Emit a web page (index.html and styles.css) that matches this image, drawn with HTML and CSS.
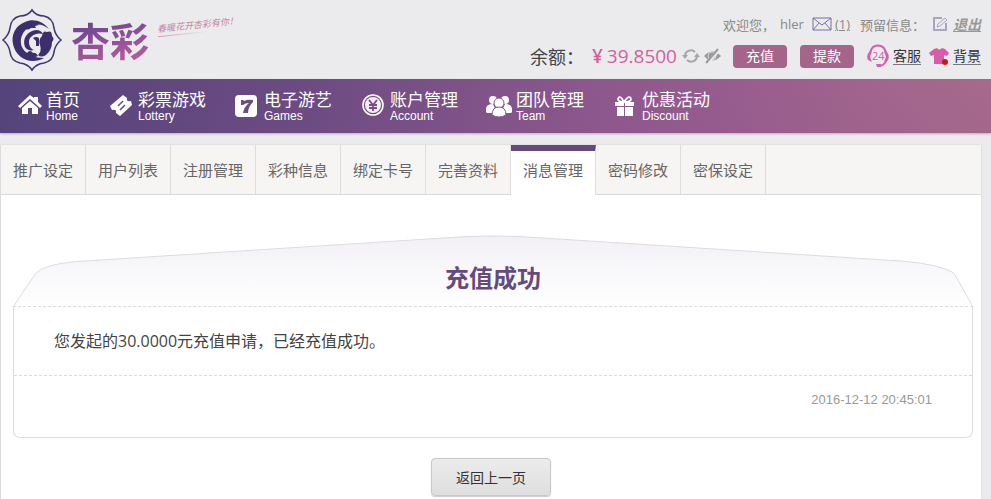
FILE: index.html
```html
<!DOCTYPE html>
<html lang="zh-CN">
<head>
<meta charset="utf-8">
<meta name="viewport" content="width=device-width, initial-scale=1">
<title>杏彩 - 消息管理</title>
<link rel="stylesheet" href="styles.css">
</head>
<body>
<header class="header">
  <a class="logo" href="#">
    <svg class="logo-mark" viewBox="0 0 62 64" aria-hidden="true">
      <path fill="none" stroke="#43346f" stroke-width="1.6" d="M31 2Q35 8 43 8Q52 10 53 20Q54 27 60 32Q54 37 53 44Q52 53 43 55Q35 56 31 62Q27 56 19 55Q10 53 9 44Q8 37 2 32Q8 27 9 20Q10 10 19 8Q27 8 31 2Z"/>
      <g fill="#3d2f6c">
        <path d="M48 21C42 13 32 10 24 14C14 18 10 27 12 36C14 46 22 53 32 53C36 53 40 52 43 50C34 50 26 47 22 41C17 33 21 22 30 18C37 15 43 17 48 21Z"/>
        <path d="M23 20C27 15 33 14 38 17L34 18L35 20L30 20Q26 23 23 20Z"/>
        <path d="M24 39C21 31 26 23 35 22C39 22 41 24 42 26C35 24 28 28 28 34C28 38 30 41 33 42C29 43 26 42 24 39Z"/>
        <path d="M32 30Q35 28 38 30L38 38L35 38L35 33Z"/>
        <path d="M41 28Q42 22 46 24Q51 22 51 28Q54 31 51 34Q51 42 45 47Q40 50 37 47Q41 43 39 37Q37 32 41 28Z"/>
        <path d="M20 45Q24 43 26 45Q29 41 32 45Q35 44 37 48Q32 51 26 49Z"/>
      </g>
    </svg>
    <span class="logo-name">杏彩</span>
    <span class="slogan">春暖花开杏彩有你！</span>
  </a>
  <div class="account">
    <div class="greeting">
      <span>欢迎您，</span>
      <span class="user">hler</span>
      <a class="mail" href="#">
        <svg width="20" height="14" viewBox="0 0 20 14" fill="none" stroke="#77709c" aria-hidden="true"><path d="M1 1H19V13H1ZM1 1L10 8L19 1M1 13L7 6M19 13L13 6"/></svg>
        <u>(1)</u>
      </a>
      <span>预留信息：</span>
      <a class="edit" href="#" aria-label="编辑预留信息">
        <svg width="15" height="14" viewBox="0 0 15 14" fill="none" stroke="#aaa6c0" aria-hidden="true"><path stroke-width="2" d="M9 1H1V13H13V6"/><path d="M4 10L5 7L12 1L14 3L7 9Z"/></svg>
      </a>
      <a class="logout" href="#">退出</a>
    </div>
    <div class="wallet">
      <span class="balance-label">余额：</span>
      <span class="yen">¥</span>
      <span class="balance">39.8500</span>
      <button class="icon-button" type="button" aria-label="刷新余额">
        <svg width="18" height="16" viewBox="0 0 18 16" aria-hidden="true"><g fill="none" stroke="#a6a6a8" stroke-width="2"><path d="M3 7A6 6 0 0 1 13 4M15 9A6 6 0 0 1 5 12"/></g><g fill="#a6a6a8"><path d="M0 7H6L3 11ZM12 9H18L15 5Z"/></g></svg>
      </button>
      <button class="icon-button eye" type="button" aria-label="隐藏余额">
        <svg width="17" height="14" viewBox="0 0 17 14" aria-hidden="true"><path fill="#9b9b9d" d="M0 7Q8-2 17 7Q8 16 0 7Z"/><circle cx="8" cy="7" r="4" fill="none" stroke="#d4d4d6"/><path stroke="#ebebed" stroke-width="3" d="M4 14L15 1"/><path stroke="#9b9b9d" stroke-width="2" d="M2 14L14 0"/></svg>
      </button>
      <button class="pill" type="button">充值</button>
      <button class="pill" type="button">提款</button>
      <a class="tool service" href="#">
        <svg width="23" height="23" viewBox="0 0 23 23" aria-hidden="true"><g fill="none" stroke="#d661a8" stroke-width="2"><path d="M3 8C5-2 17-2 19 8M20 14Q18 20 13 21"/></g><path fill="#d661a8" d="M5 6L2 7Q-1 11 1 15L5 17L3 12ZM17 6L20 7Q23 11 21 15L17 17L19 12ZM9 19H14V22H10Z"/><text class="service-hours" x="5" y="15">24</text></svg>
        <span>客服</span>
      </a>
      <a class="tool" href="#">
        <svg width="21" height="19" viewBox="0 0 21 19" aria-hidden="true"><path fill="#d75cab" d="M5 2L8 1Q10 4 13 1L16 2L20 6L18 9L15 8V17H5V8L2 9L0 6Z"/><circle cx="16" cy="15" r="3" fill="#d0151b"/></svg>
        <span>背景</span>
      </a>
    </div>
  </div>
</header>

<nav class="main-nav" aria-label="主导航">
  <a href="#">
    <svg viewBox="0 0 24 24" fill="#fff" aria-hidden="true"><path d="M12 1L16 4V3H20V8L24 12L22 14L12 5L2 14L0 12Z"/><path d="M4 14L12 7L20 14V20H14V14H10V20H4Z"/></svg>
    <span class="nav-text"><span>首页</span><small>Home</small></span>
  </a>
  <a href="#">
    <svg viewBox="0 0 24 24" aria-hidden="true"><path fill="#fff" d="M13 1L17 4Q16 8 21 7L22 11L10 22L6 19Q7 15 2 16L0 12Z"/><path stroke="#654981" stroke-width="1.5" d="M8 12L13 7M10 16L15 11"/></svg>
    <span class="nav-text"><span>彩票游戏</span><small>Lottery</small></span>
  </a>
  <a href="#">
    <svg viewBox="0 0 24 24" aria-hidden="true"><rect x="-1" y="1" width="22" height="22" rx="4" fill="#fff"/><path fill="#6d4b83" d="M5 6H7L8 7Q12 5 17 6V8Q12 13 12 19H7Q8 13 13 9Q9 9 7 11H5Z"/></svg>
    <span class="nav-text"><span>电子游艺</span><small>Games</small></span>
  </a>
  <a href="#">
    <svg viewBox="0 0 24 24" aria-hidden="true"><circle cx="11" cy="11" r="10" fill="none" stroke="#fff" stroke-width="1.6"/><circle cx="11" cy="11" r="8" fill="#f7edf7"/><path fill="none" stroke="#754c85" stroke-width="1.8" d="M7 6L11 11L15 6M11 11V17M7 11H15M7 14H15"/></svg>
    <span class="nav-text"><span>账户管理</span><small>Account</small></span>
  </a>
  <a href="#">
    <svg viewBox="0 0 24 24" fill="#fff" aria-hidden="true"><circle cx="5" cy="6" r="4"/><circle cx="17" cy="6" r="4"/><path d="M-2 18V14Q-1 10 5 10L9 19H-1ZM24 18V14Q23 10 17 10L13 19H23Z"/><g stroke="#83558a"><circle cx="11" cy="9" r="5"/><path d="M4 21Q4 13 11 13T18 21Q11 25 4 21Z"/></g></svg>
    <span class="nav-text"><span>团队管理</span><small>Team</small></span>
  </a>
  <a href="#">
    <svg viewBox="0 0 24 24" fill="#fff" aria-hidden="true"><path d="M1 8H10V12H1ZM11 8H20V12H11ZM3 13H10V22H3ZM11 13H19V22H11Z"/><path fill="none" stroke="#fff" stroke-width="1.8" d="M10 8Q4 8 4 5Q6 0 10 8Q15 0 17 5Q17 8 10 8"/></svg>
    <span class="nav-text"><span>优惠活动</span><small>Discount</small></span>
  </a>
</nav>

<main class="panel">
  <nav class="tabs" aria-label="管理菜单">
    <a href="#">推广设定</a>
    <a href="#">用户列表</a>
    <a href="#">注册管理</a>
    <a href="#">彩种信息</a>
    <a href="#">绑定卡号</a>
    <a href="#">完善资料</a>
    <a class="active" href="#" aria-current="page">消息管理</a>
    <a href="#">密码修改</a>
    <a href="#">密保设定</a>
  </nav>
  <article class="message">
    <header class="message-head">
      <svg class="flap" viewBox="0 0 960 71" preserveAspectRatio="none" aria-hidden="true">
        <defs><linearGradient id="flap-fill" x1="0" y1="0" x2="0" y2="1"><stop offset="0" stop-color="#f2f0f5"/><stop offset="1" stop-color="#fff"/></linearGradient></defs>
        <path fill="url(#flap-fill)" stroke="#dddbe0" d="M0 72L23 38Q34 28 72 26L430 3Q480-1 530 3L888 26Q926 29 941 38L960 72"/>
      </svg>
      <h1>充值成功</h1>
    </header>
    <div class="message-body">
      <p>您发起的30.0000元充值申请，已经充值成功。</p>
      <time datetime="2016-12-12T20:45:01">2016-12-12 20:45:01</time>
    </div>
  </article>
  <button class="back" type="button">返回上一页</button>
</main>
</body>
</html>
```
FILE: styles.css
```css
* { box-sizing: border-box; }

body {
  margin: 0;
  min-height: 100vh;
  display: flex;
  flex-direction: column;
  background: #ebebed;
  color: #444;
  font-family: "Open Sans", "Noto Sans CJK SC", sans-serif;
  font-size: 14px;
}

a { color: inherit; text-decoration: none; }
svg { display: block; flex: none; overflow: visible; }
button { font-family: inherit; cursor: pointer; }

.header {
  display: flex;
  justify-content: space-between;
  height: 79px;
  padding: 8px 10px 0 1px;
}

.logo { display: flex; align-items: flex-start; }
.logo-mark { width: 62px; height: 64px; }

.logo-name {
  margin: 6px 0 0 8px;
  background: linear-gradient(165deg, #6d4694 20%, #b25b98 80%);
  background-clip: text;
  color: transparent;
  font-size: 39px;
  font-weight: 700;
  line-height: 54px;
}

.slogan {
  margin: 9px 0 0 8px;
  background: linear-gradient(90deg, #d59aae, transparent) 0 100% / 50px 1px no-repeat;
  color: #c4869b;
  font-family: "Noto Sans CJK SC", sans-serif;
  font-size: 9px;
  font-style: italic;
  line-height: 16px;
  transform: rotate(-6deg);
}

.account { display: flex; flex-direction: column; gap: 8px; padding-top: 4px; }
.greeting,
.wallet { display: flex; align-items: center; justify-content: flex-end; height: 24px; white-space: nowrap; }
.greeting { color: #888; font-size: 13px; }
.user { margin: 0 8px 0 5px; }
.mail { display: flex; align-items: center; gap: 3px; margin-right: 10px; }
.edit { margin-right: 5px; margin-left: 8px; }
.logout { color: #999; font-size: 14px; font-style: italic; font-weight: 700; text-decoration: underline; }

.balance-label { font-size: 18px; }
.yen { margin-left: 8px; color: #d45f9f; font-size: 19px; font-weight: 600; }
.balance { margin: 0 5px 0 4px; color: #d45f9f; font-size: 19px; }
.icon-button { padding: 0; border: 0; background: none; }
.eye { margin: 0 12px 0 4px; }

.pill {
  width: 54px;
  height: 23px;
  margin-right: 13px;
  padding: 0;
  border: 0;
  border-radius: 4px;
  background: #a5658b;
  color: #fff;
  font-size: 14px;
  line-height: 22px;
}

.tool { display: flex; align-items: center; gap: 3px; color: #333; }
.tool span { border-bottom: 1px solid #777; line-height: 16px; }
.service { margin-right: 8px; }
.service-hours { fill: #d661a8; font-size: 11px; }

.main-nav {
  display: flex;
  gap: 30px;
  height: 54px;
  padding: 11px 18px 0;
  background:
    linear-gradient(155deg, #b3718e00 50%, #7c4a8255),
    linear-gradient(100deg, #54447b, #6b4b82 30%, #8b578c 58%, #9c5f90 74%, #b87690);
  box-shadow: 0 1px 2px #b9adbd;
  color: #fff;
}

.main-nav a { display: flex; gap: 4px; }
.main-nav svg { width: 24px; height: 24px; margin-top: 4px; }
.nav-text { display: flex; flex-direction: column; font-size: 17px; line-height: 19px; white-space: nowrap; }
.nav-text small { font-family: "Liberation Sans", sans-serif; font-size: 12px; line-height: 14px; }

.panel {
  flex: 1;
  margin: 12px 10px 0 0;
  border-left: 1px solid #dcdcde;
  background: #fff;
  box-shadow: 0 0 2px #cfcfd2;
}

.tabs { display: flex; height: 50px; border-bottom: 1px solid #dcdad9; background: #f6f5f3; }

.tabs a {
  flex: 0 0 85px;
  height: 49px;
  border-right: 1px solid #e0dedd;
  color: #666;
  font-size: 15px;
  line-height: 50px;
  text-align: center;
}

.tabs .active { height: 50px; border-top: 6px solid #654a7c; background: #fff; line-height: 38px; }

.message { margin: 40px 8px 0 12px; }
.message-head { position: relative; height: 71px; }
.flap { position: absolute; inset: 0; width: 100%; height: 71px; }

h1 {
  position: relative;
  margin: 0;
  padding-top: 25px;
  color: #654a7c;
  font-size: 24px;
  line-height: 36px;
  text-align: center;
}

.message-body {
  position: relative;
  border: 1px solid #dddbe0;
  border-top: 1px dashed #dddbe0;
  border-radius: 0 0 7px 7px;
}

.message p {
  margin: 0;
  padding: 0 40px;
  border-bottom: 1px dashed #dddbe0;
  color: #444;
  font-size: 16px;
  line-height: 68px;
}

time {
  display: block;
  padding: 16px 40px 30px;
  color: #999;
  font-family: "Liberation Sans", sans-serif;
  font-size: 13px;
  line-height: 15px;
  text-align: right;
}

.back {
  display: block;
  width: 120px;
  height: 38px;
  margin: 20px auto 3px;
  padding: 0;
  border: 1px solid #c8c8c8;
  border-radius: 4px;
  background: linear-gradient(#ececec, #dedede);
  box-shadow: 0 1px 1px #ccc;
  color: #333;
  font-size: 14px;
}
```
